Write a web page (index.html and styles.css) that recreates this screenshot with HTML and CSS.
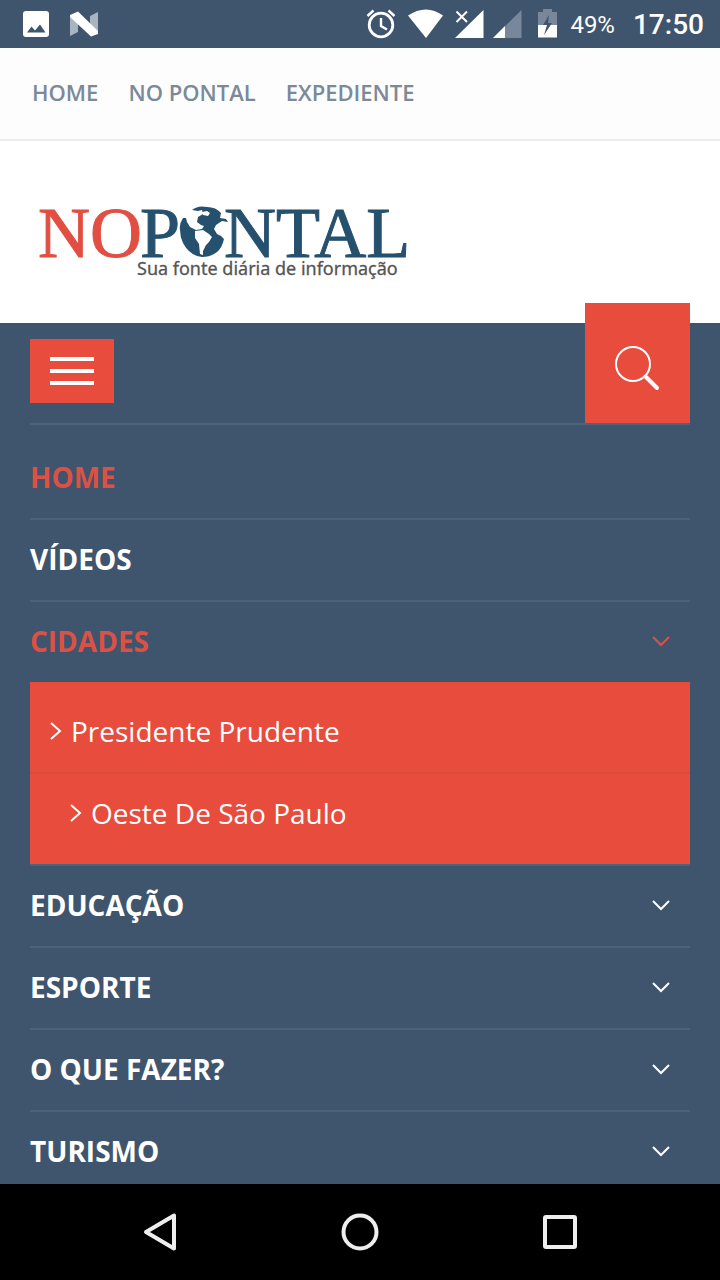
FILE: index.html
```html
<!DOCTYPE html>
<html lang="pt-BR">
<head>
<meta charset="utf-8">
<meta name="viewport" content="width=device-width, initial-scale=1">
<title>No Pontal</title>
<link rel="stylesheet" href="styles.css">
</head>
<body>
<div class="status">
  <svg class="status-left" width="80" height="30" viewBox="0 0 80 30" aria-hidden="true">
    <path fill="#fff" fill-rule="evenodd" d="M3 2h20a3 3 0 0 1 3 3v20a3 3 0 0 1-3 3H3a3 3 0 0 1-3-3V5a3 3 0 0 1 3-3zM4 23.500h18.500L17 15.500l-5 6-3.500-4z"/>
    <path fill="#a9b4c1" d="M47 6l8 9v8l-8 4zM67 7l8-4v21l-8-8z"/>
    <path fill="#fff" d="M47 6l8-3.500L75 22v3l-7 2.500L47 8z"/>
  </svg>
  <div class="status-right">
    <svg width="156" height="34" viewBox="0 0 156 34" aria-hidden="true">
      <g fill="none" stroke="#fff" stroke-width="2.800">
        <circle cx="15" cy="18" r="11.800"/>
        <path d="M1.500 9l6-5.500M28.500 9l-6-5.500M15 11v8l6 3.500" stroke-width="2.400"/>
      </g>
      <path fill="#fff" d="M42 8.500Q60 -3.500 77 8.500L60 31z"/>
      <path fill="#fff" d="M89 31L117.500 3v28z"/>
      <path fill="#3f556d" d="M87 2h15v15H87z"/>
      <path d="M90.500 4.500l10.500 10.500M101 4.500L90.500 15" stroke="#fff" stroke-width="2"/>
      <path fill="#788799" d="M127 31L155.500 3v28z"/>
      <path fill="#fff" d="M127 31l12-12v12z"/>
    </svg>
    <svg class="battery" width="20" height="34" viewBox="0 0 20 34" aria-hidden="true">
      <path fill="#788799" d="M0 5h5V2h9v3h5v13H0z"/>
      <path fill="#fff" d="M0 18h19v12.500H0z"/>
      <path fill="#3f556d" d="M11 8l-6 10h4l-3 10 8-12h-4z"/>
    </svg>
    <span class="percent">49%</span>
    <time class="clock">17:50</time>
  </div>
</div>
<nav class="topnav" aria-label="Institucional">
  <a href="#">HOME</a>
  <a href="#">NO PONTAL</a>
  <a href="#">EXPEDIENTE</a>
</nav>
<header class="brand">
  <a class="logo" href="#" aria-label="No Pontal">
    <svg width="380" height="90" viewBox="0 0 380 90">
      <g class="wordmark">
        <text class="red" x="8" y="61">NO</text>
        <text x="110" y="61">P</text>
        <text x="194" y="61">NTAL</text>
      </g>
      <path fill="#25506e" d="M153 22Q149 28 150 34Q150 41 153 47Q160 60 172 61Q181 61 187 56Q192 52 194 43L191 40L187 38L184 33L186 29L192 25L198 26L196 23L190 22L191 17Q186 11 177 11Q168 9 162 14L168 15L172 14L173 18L168 21L167 26L171 29L174 30L172 33L166 34L160 31L157 26L156 22z"/>
      <path fill="#fff" d="M165 35L173 34L179 38L182 41L179 46L176 49L173 55L173 59L170 58L169 48L165 42z"/>
      <path fill="#fff" d="M172 16l5-1 3 2-2 3-5-1z"/>
      <text class="tagline" x="107" y="79">Sua fonte diária de informação</text>
    </svg>
  </a>
</header>
<main class="panel">
  <div class="toolbar">
    <button class="burger" type="button" aria-label="Menu"><span></span><span></span><span></span></button>
    <button class="search" type="button" aria-label="Buscar">
      <svg width="48" height="48" viewBox="0 0 48 48" fill="none" stroke="#fff" stroke-linecap="round">
        <circle cx="19" cy="19" r="17" stroke-width="2"/>
        <path d="M31.500 31.500l11.500 11.500" stroke-width="4"/>
      </svg>
    </button>
  </div>
  <ul class="menu">
    <li><a class="active" href="#">HOME</a></li>
    <li><a href="#">VÍDEOS</a></li>
    <li class="open"><a class="active" href="#">CIDADES<svg class="chev" viewBox="0 0 18 12"><path d="M1 2l8 8 8-8"/></svg></a>
      <ul class="submenu">
        <li><a href="#"><svg class="arrow" viewBox="0 0 11 20"><path d="M1 2l9 8-9 8"/></svg>Presidente Prudente</a></li>
        <li class="nested"><a href="#"><svg class="arrow" viewBox="0 0 11 20"><path d="M1 2l9 8-9 8"/></svg>Oeste De São Paulo</a></li>
      </ul>
    </li>
    <li><a href="#">EDUCAÇÃO<svg class="chev" viewBox="0 0 18 12"><path d="M1 2l8 8 8-8"/></svg></a></li>
    <li><a href="#">ESPORTE<svg class="chev" viewBox="0 0 18 12"><path d="M1 2l8 8 8-8"/></svg></a></li>
    <li><a href="#">O QUE FAZER?<svg class="chev" viewBox="0 0 18 12"><path d="M1 2l8 8 8-8"/></svg></a></li>
    <li><a href="#">TURISMO<svg class="chev" viewBox="0 0 18 12"><path d="M1 2l8 8 8-8"/></svg></a></li>
  </ul>
</main>
<footer class="sysbar">
  <button type="button" aria-label="Voltar"><svg width="40" height="40" viewBox="0 0 40 40"><path d="M6 20L34 3.500v33z"/></svg></button>
  <button type="button" aria-label="Início"><svg width="40" height="40" viewBox="0 0 40 40"><circle cx="20" cy="20" r="16.500"/></svg></button>
  <button type="button" aria-label="Recentes"><svg width="40" height="40" viewBox="0 0 40 40"><rect x="5" y="5" width="30" height="30" rx="1"/></svg></button>
</footer>
</body>
</html>
```
FILE: styles.css
```css
* { box-sizing: border-box; }
body {
  margin: 0;
  min-height: 100vh;
  display: flex;
  flex-direction: column;
  background: #3f556d;
  font-family: "Open Sans", "Noto Sans", sans-serif;
}
a { text-decoration: none; color: inherit; }
button { border: 0; padding: 0; background: none; }
ul { list-style: none; margin: 0; padding: 0; }
svg { display: block; flex: none; overflow: visible; }

.status {
  flex: none;
  height: 48px;
  padding: 0 16px 0 23px;
  display: flex;
  align-items: center;
  justify-content: space-between;
  color: #fff;
  font-family: Roboto, sans-serif;
}
.status-right { display: flex; align-items: center; }
.status-right .battery { margin: 0 12px 0 16px; }
.percent { font-size: 24px; line-height: 28px; padding-top: 2px; margin-right: 18px; }
.clock { font-size: 28px; line-height: 32px; padding-top: 2px; font-weight: 500; }

.topnav {
  flex: none;
  display: flex;
  gap: 30px;
  padding: 29px 32px 31px;
  background: #fdfdfd;
  border-bottom: 2px solid #ededed;
  color: #7b8999;
  font-size: 22px;
  line-height: 31px;
  font-weight: 600;
}
.brand { flex: none; background: #fff; padding: 55px 30px 37px; }
.logo { display: block; }
.wordmark {
  font-family: "Liberation Serif", serif;
  font-size: 72px;
  fill: #25506e;
  stroke: #25506e;
  stroke-width: 1;
}
.wordmark .red { fill: #e14f43; stroke: #e14f43; }
.tagline { font-family: "Noto Sans", sans-serif; font-size: 18px; fill: #555; stroke: #555; stroke-width: 0.3; }

.panel { flex: 1; padding: 0 30px; }
.toolbar {
  height: 102px;
  display: flex;
  justify-content: space-between;
  align-items: flex-start;
  border-bottom: 2px solid #4d627c;
}
.burger {
  width: 84px;
  height: 64px;
  margin-top: 16px;
  padding: 0 20px;
  display: flex;
  flex-direction: column;
  justify-content: center;
  gap: 8px;
  background: #e74c3c;
}
.burger span { height: 4px; background: #fff; }
.search {
  width: 105px;
  height: 120px;
  margin-top: -20px;
  display: grid;
  place-items: center;
  padding-top: 12px;
  background: #e74c3c;
}
.menu { padding-top: 13px; }
.menu > li { border-bottom: 2px solid #4a607c; }
.menu > li:last-child { border: 0; margin-bottom: -8px; }
.menu > .open { border-color: #4d627c; }
.menu a {
  height: 80px;
  padding-bottom: 2px;
  display: flex;
  align-items: center;
  color: #fff;
  font-size: 28px;
  font-weight: 700;
}
.menu .active { color: #db5145; }
.chev {
  width: 18px;
  height: 12px;
  margin: 0 20px 0 auto;
  fill: none;
  stroke: currentColor;
  stroke-width: 2;
}
.submenu { background: #e74c3c; padding: 10px 0; }
.submenu li + li { border-top: 2px solid #db4a3c; }
.submenu a { padding-left: 20px; gap: 10px; font-weight: 400; }
.submenu .nested a { padding-left: 40px; }
.arrow { width: 11px; height: 20px; fill: none; stroke: #fff; stroke-width: 2; }

.sysbar {
  position: relative;
  flex: none;
  height: 96px;
  display: flex;
  justify-content: center;
  align-items: center;
  gap: 160px;
  background: #000;
}
.sysbar svg { fill: none; stroke: #eee; stroke-width: 4; stroke-linejoin: round; }
```
